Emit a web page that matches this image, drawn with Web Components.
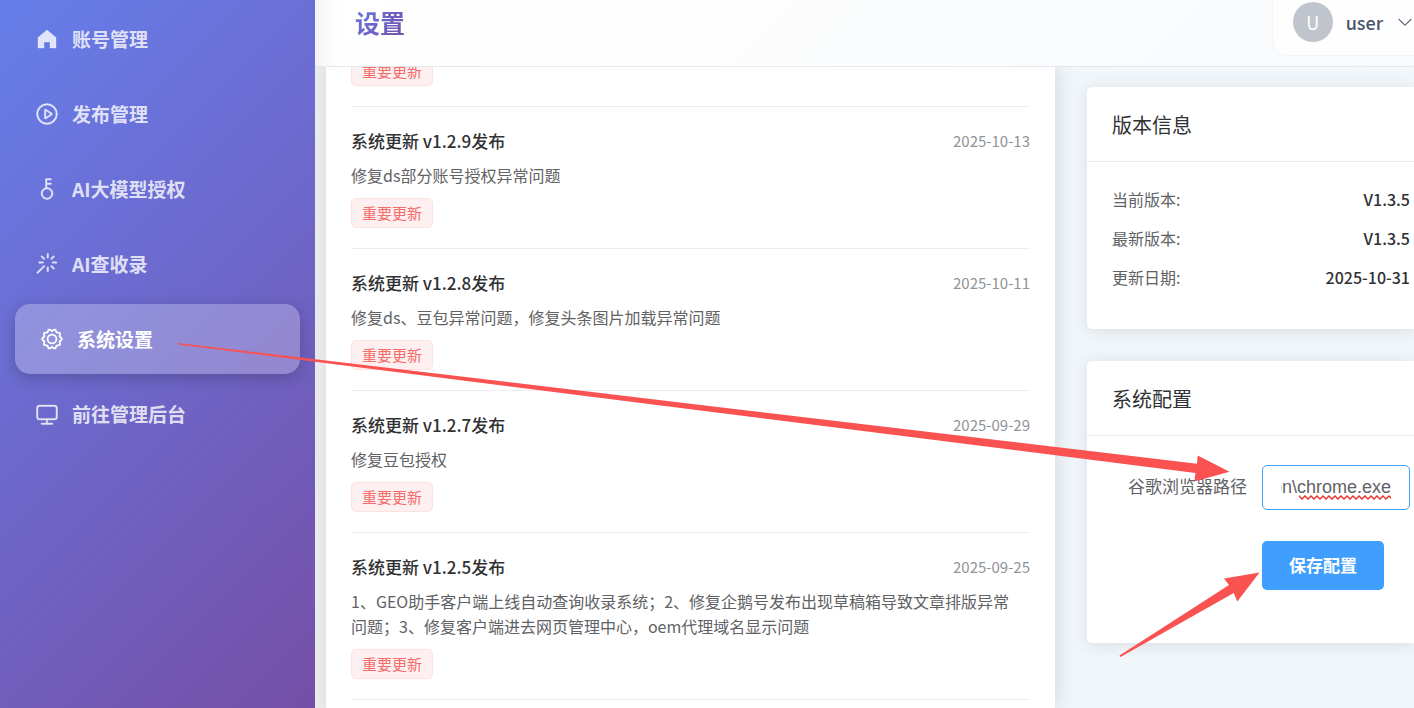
<!DOCTYPE html>
<html lang="zh-CN">
<head>
<meta charset="UTF-8">
<meta name="viewport" content="width=device-width, initial-scale=1.0">
<title>设置</title>
<style>
  body {
    margin: 0;
    font-family: "Noto Sans CJK SC", sans-serif;
    color: #303133;
  }
</style>
</head>
<body>
<app-shell>
  <side-nav slot="nav">
    <nav-item icon="home">账号管理</nav-item>
    <nav-item icon="play">发布管理</nav-item>
    <nav-item icon="key">AI大模型授权</nav-item>
    <nav-item icon="magic">AI查收录</nav-item>
    <nav-item icon="setting" active>系统设置</nav-item>
    <nav-item icon="monitor">前往管理后台</nav-item>
  </side-nav>

  <page-header slot="header" user="user">设置</page-header>

  <update-list slot="list">
    <update-item></update-item>
    <update-item title-text="系统更新 v1.2.9发布" date="2025-10-13">修复ds部分账号授权异常问题</update-item>
    <update-item title-text="系统更新 v1.2.8发布" date="2025-10-11">修复ds、豆包异常问题，修复头条图片加载异常问题</update-item>
    <update-item title-text="系统更新 v1.2.7发布" date="2025-09-29">修复豆包授权</update-item>
    <update-item title-text="系统更新 v1.2.5发布" date="2025-09-25">1、GEO助手客户端上线自动查询收录系统；2、修复企鹅号发布出现草稿箱导致文章排版异常问题；3、修复客户端进去网页管理中心，oem代理域名显示问题</update-item>
  </update-list>

  <info-card slot="side" heading="版本信息">
    <version-info></version-info>
  </info-card>
  <info-card slot="side" heading="系统配置">
    <config-form></config-form>
  </info-card>
</app-shell>
<arrow-overlay></arrow-overlay>

<script>
  // scalloped outline of the gear, ten rounded teeth
  const gearPoints = () => {
    const points = [];
    for (let deg = 0; deg < 360; deg += 4) {
      const a = deg * Math.PI / 180;
      const r = 382 + 38 * Math.cos(a * 10);
      points.push(`${Math.round(512 + r * Math.cos(a))} ${Math.round(512 + r * Math.sin(a))}`);
    }
    return points.join(' ');
  };

  const ICONS = {
    home: '<path d="M512 128 128 447.936V896h255.936V640H640v256h255.936V447.936z"/>',
    play: '<path d="M512 64a448 448 0 1 1 0 896 448 448 0 0 1 0-896m0 832a384 384 0 0 0 0-768 384 384 0 0 0 0 768m-48-247.616L668.608 512 464 375.616zm10.624-342.656 249.472 166.336a48 48 0 0 1 0 79.872L474.624 718.272A48 48 0 0 1 400 678.336V345.6a48 48 0 0 1 74.624-39.936z"/>',
    key: '<path d="M448 456.064V96a32 32 0 0 1 32-32.064L672 64a32 32 0 0 1 0 64H512v128h160a32 32 0 0 1 0 64H512v128a256 256 0 1 1-64 8.064M512 896a192 192 0 1 0 0-384 192 192 0 0 0 0 384"/>',
    magic: '<path d="M512 64h64v192h-64zm0 576h64v192h-64zM160 480v-64h192v64zm576 0v-64h192v64zM249.856 199.04l45.248-45.184L430.848 289.6 385.6 334.848 249.856 199.104zM657.152 606.4l45.248-45.248 135.744 135.744-45.248 45.248zM114.048 923.2 68.8 877.952l316.8-316.8 45.248 45.248zM702.4 334.848 657.152 289.6l135.744-135.744 45.248 45.248z"/>',
    setting: `<g fill="none" stroke-width="76" stroke-linejoin="round"><polygon points="${gearPoints()}"/><circle cx="512" cy="512" r="190"/></g>`,
    monitor: '<path d="M544 768v128h192a32 32 0 1 1 0 64H288a32 32 0 1 1 0-64h192V768H192A128 128 0 0 1 64 640V256a128 128 0 0 1 128-128h640a128 128 0 0 1 128 128v384a128 128 0 0 1-128 128zM192 192a64 64 0 0 0-64 64v384a64 64 0 0 0 64 64h640a64 64 0 0 0 64-64V256a64 64 0 0 0-64-64z"/>',
    down: '<path d="M831.872 340.864 512 652.672 192.128 340.864a30.592 30.592 0 0 0-42.752 0 29.12 29.12 0 0 0 0 41.6L489.664 714.24a32 32 0 0 0 44.672 0l340.288-331.712a29.12 29.12 0 0 0 0-41.728 30.592 30.592 0 0 0-42.752 0z"/>'
  };

  const icon = (name) => `<svg viewBox="0 0 1024 1024" fill="currentColor" aria-hidden="true">${ICONS[name]}</svg>`;

  class AppShell extends HTMLElement {
    connectedCallback() {
      this.attachShadow({ mode: 'open' });
      this.shadowRoot.innerHTML = `
        <style>
          :host {
            display: grid;
            grid-template-columns: 315px minmax(0, 1fr);
            height: 100vh;
            overflow: hidden;
          }

          .main {
            display: flex;
            flex-direction: column;
            min-height: 0;
            background: #f1f6fa;
          }

          .content {
            flex: 1;
            min-height: 0;
            overflow: hidden;
            display: grid;
            grid-template-columns: minmax(0, 729fr) minmax(0, 327fr);
            gap: 32px;
            padding-left: 11px;
            background: linear-gradient(90deg, #e9ebec 11px, transparent 11px);
          }

          .side {
            display: flex;
            flex-direction: column;
            gap: 32px;
            padding-top: 20px;
          }
        </style>
        <slot name="nav"></slot>
        <div class="main">
          <slot name="header"></slot>
          <div class="content">
            <slot name="list"></slot>
            <div class="side"><slot name="side"></slot></div>
          </div>
        </div>
      `;
    }
  }

  class SideNav extends HTMLElement {
    connectedCallback() {
      this.attachShadow({ mode: 'open' });
      this.shadowRoot.innerHTML = `
        <style>
          :host {
            display: block;
            background: linear-gradient(135deg, #667eea 0%, #764ba2 108%);
          }

          nav {
            display: flex;
            flex-direction: column;
            gap: 5px;
            padding: 4px 15px;
          }
        </style>
        <nav><slot></slot></nav>
      `;
    }
  }

  class NavItem extends HTMLElement {
    connectedCallback() {
      this.attachShadow({ mode: 'open' });
      this.shadowRoot.innerHTML = `
        <style>
          :host { display: block; }

          a {
            display: flex;
            align-items: center;
            gap: 13px;
            box-sizing: border-box;
            height: 70px;
            padding: 0 20px 1px;
            border-radius: 15px;
            font-size: 19px;
            font-weight: 600;
            color: rgba(255, 255, 255, 0.8);
            text-decoration: none;
          }

          :host([active]) a {
            padding-left: 25px;
            color: #fff;
            background: rgba(255, 255, 255, 0.25);
            box-shadow: 0 4px 15px rgba(0, 0, 0, 0.2);
          }

          svg {
            width: 24px;
            height: 24px;
            stroke: currentColor;
            stroke-width: 16px;
          }
        </style>
        <a href="#">${icon(this.getAttribute('icon'))}<span><slot></slot></span></a>
      `;
    }
  }

  class PageHeader extends HTMLElement {
    connectedCallback() {
      const user = this.getAttribute('user');
      this.attachShadow({ mode: 'open' });
      this.shadowRoot.innerHTML = `
        <style>
          :host {
            display: flex;
            justify-content: space-between;
            align-items: flex-start;
            height: 66px;
            padding-left: 40px;
            border-bottom: 1px solid #e2e8f0;
            background:
              linear-gradient(90deg, #f4f4f6, transparent 24px),
              linear-gradient(135deg, #fff 0%, #f8fafc 100%);
          }

          h1 {
            margin: 0;
            font-size: 25px;
            line-height: 44px;
            font-weight: 600;
            background: linear-gradient(135deg, #667eea, #764ba2);
            -webkit-background-clip: text;
            background-clip: text;
            color: transparent;
          }

          button {
            display: flex;
            align-items: center;
            gap: 13px;
            padding: 2px 0 13px 20px;
            border: solid #f1f5f9;
            border-width: 0 0 1px 1px;
            border-radius: 0 0 0 15px;
            background: rgba(255, 255, 255, 0.8);
            font: 500 18px/40px "Noto Sans CJK SC", sans-serif;
            color: #475569;
          }

          .avatar {
            width: 40px;
            border-radius: 50%;
            background: #c0c4cc;
            color: #fff;
            font-weight: 400;
          }

          svg { width: 18px; height: 18px; }
        </style>
        <h1><slot></slot></h1>
        <button type="button">
          <span class="avatar">${user[0].toUpperCase()}</span>
          <span>${user}</span>
          ${icon('down')}
        </button>
      `;
    }
  }

  class UpdateList extends HTMLElement {
    connectedCallback() {
      this.attachShadow({ mode: 'open' });
      this.shadowRoot.innerHTML = `
        <style>
          :host {
            display: block;
            padding: 0 25px;
            background: #fff;
            box-shadow: 4px 0 16px rgba(0, 0, 0, 0.1);
          }

          /* the list is scrolled, its first row is cut by the header */
          .rows { margin-top: -11px; }
        </style>
        <div class="rows"><slot></slot></div>
      `;
    }
  }

  class UpdateItem extends HTMLElement {
    connectedCallback() {
      const title = this.getAttribute('title-text');
      const text = title ? `
        <div class="head">
          <h3>${title}</h3>
          <time>${this.getAttribute('date')}</time>
        </div>
        <p><slot></slot></p>` : '';

      this.attachShadow({ mode: 'open' });
      this.shadowRoot.innerHTML = `
        <style>
          :host {
            display: block;
            padding: 21px 0 20px;
            border-bottom: 1px solid #ebeef5;
          }

          :host(:first-child) { padding-top: 0; }

          .head {
            display: flex;
            justify-content: space-between;
            align-items: center;
            line-height: 25px;
          }

          h3 {
            margin: 0;
            font-size: 17px;
            font-weight: 500;
            color: #303133;
          }

          time {
            font-size: 15px;
            color: #909399;
          }

          p {
            margin: 10px 0;
            padding-right: 10px;
            font-size: 16px;
            line-height: 25px;
            color: #606266;
          }

          .tag {
            display: block;
            box-sizing: border-box;
            width: fit-content;
            padding: 0 10px;
            border: 1px solid #fde2e2;
            border-radius: 5px;
            background: #fef0f0;
            font-size: 15px;
            line-height: 28px;
            color: #f56c6c;
          }
        </style>
        ${text}
        <span class="tag">重要更新</span>
      `;
    }
  }

  class InfoCard extends HTMLElement {
    connectedCallback() {
      this.attachShadow({ mode: 'open' });
      this.shadowRoot.innerHTML = `
        <style>
          :host {
            display: block;
            border-radius: 5px 0 0 5px;
            background: #fff;
            box-shadow: 0 2px 16px rgba(0, 0, 0, 0.1);
          }

          h2 {
            margin: 0;
            padding: 2px 25px 0;
            border-bottom: 1px solid #ebeef5;
            font-size: 20px;
            line-height: 72px;
            font-weight: 400;
            color: #303133;
          }
        </style>
        <h2>${this.getAttribute('heading')}</h2>
        <slot></slot>
      `;
    }
  }

  class VersionInfo extends HTMLElement {
    connectedCallback() {
      this.attachShadow({ mode: 'open' });
      this.shadowRoot.innerHTML = `
        <style>
          :host { display: block; }

          dl {
            display: flex;
            flex-direction: column;
            gap: 15px;
            margin: 0;
            padding: 25px 4px 40px 25px;
            font-size: 16px;
            line-height: 24px;
          }

          div { display: flex; justify-content: space-between; }
          dt { color: #606266; }
          dd { margin: 0; font-weight: 500; color: #303133; }
        </style>
        <dl>
          <div><dt>当前版本:</dt><dd>V1.3.5</dd></div>
          <div><dt>最新版本:</dt><dd>V1.3.5</dd></div>
          <div><dt>更新日期:</dt><dd>2025-10-31</dd></div>
        </dl>
      `;
    }
  }

  class ConfigForm extends HTMLElement {
    connectedCallback() {
      this.attachShadow({ mode: 'open' });
      this.shadowRoot.innerHTML = `
        <style>
          :host { display: block; }

          form {
            display: grid;
            grid-template-columns: 135px minmax(0, 1fr);
            column-gap: 15px;
            row-gap: 31px;
            align-items: center;
            padding: 29px 4px 53px 25px;
            font-size: 17px;
          }

          label {
            padding-bottom: 4px;
            text-align: right;
            color: #606266;
          }

          .field { position: relative; display: flex; }

          input {
            box-sizing: border-box;
            width: 100%;
            height: 45px;
            padding: 0 18px;
            border: 1px solid #409eff;
            border-radius: 5px;
            outline: none;
            background: #fff;
            font: 18px "Liberation Sans", Arial, sans-serif;
            color: #606266;
          }

          /* spelling mark under the last word */
          .spell {
            position: absolute;
            right: 19px;
            bottom: 10px;
            width: 92px;
            height: 5px;
          }

          button {
            grid-column: 2;
            justify-self: start;
            height: 49px;
            padding: 0 27px 3px;
            border: 0;
            border-radius: 5px;
            background: #409eff;
            font: 600 17px "Noto Sans CJK SC", sans-serif;
            color: #fff;
          }
        </style>
        <form>
          <label for="path">谷歌浏览器路径</label>
          <div class="field">
            <input id="path" type="text" spellcheck="false" value="on\\chrome.exe">
            <svg class="spell" aria-hidden="true">
              <defs>
                <pattern id="wave" width="6" height="5" patternUnits="userSpaceOnUse">
                  <path d="M-1 0 0 1 3 4 6 1 7 0" fill="none" stroke="#e5322d" stroke-width="1.4"/>
                </pattern>
              </defs>
              <rect width="92" height="5" fill="url(#wave)"/>
            </svg>
          </div>
          <button type="button">保存配置</button>
        </form>
      `;

      const input = this.shadowRoot.querySelector('input');
      input.scrollLeft = input.scrollWidth;
    }
  }

  class ArrowOverlay extends HTMLElement {
    connectedCallback() {
      this.attachShadow({ mode: 'open' });
      this.shadowRoot.innerHTML = `
        <style>
          :host {
            position: absolute;
            inset: 0;
            overflow: hidden;
            pointer-events: none;
          }

          svg { display: block; width: 100%; height: 100%; }
        </style>
        <svg viewBox="0 0 1414 708" fill="#fa5151" aria-hidden="true">
          <path d="M178 343 1197 463.7 1197.7 455.5 1229.5 471.8 1194.3 481.5 1195.5 473 178 344.5z"/>
          <path d="M1119.5 655.5 1229 585 1224 578.5 1259.5 572.5 1237.3 601.5 1233.7 593 1120.5 657z"/>
        </svg>
      `;
    }
  }

  customElements.define('app-shell', AppShell);
  customElements.define('side-nav', SideNav);
  customElements.define('nav-item', NavItem);
  customElements.define('page-header', PageHeader);
  customElements.define('update-list', UpdateList);
  customElements.define('update-item', UpdateItem);
  customElements.define('info-card', InfoCard);
  customElements.define('version-info', VersionInfo);
  customElements.define('config-form', ConfigForm);
  customElements.define('arrow-overlay', ArrowOverlay);
</script>
</body>
</html>
